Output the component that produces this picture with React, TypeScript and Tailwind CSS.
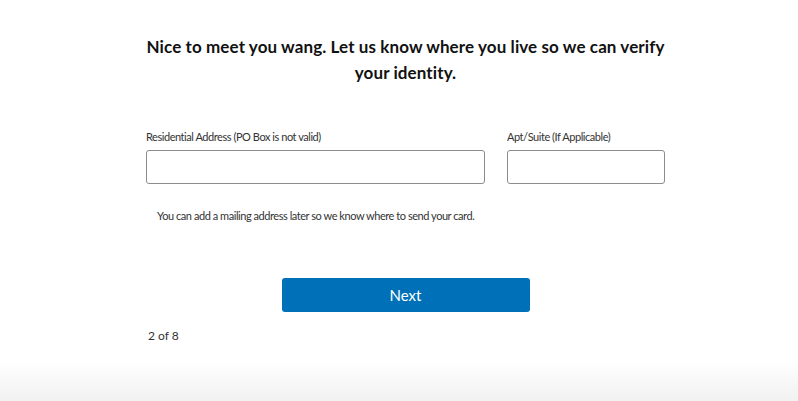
export default function App() {
  return (
    <div className="h-[401px] w-full overflow-hidden bg-[linear-gradient(to_bottom,#ffffff_360px,#f1f1f1_401px)] font-['Lato','Open_Sans',sans-serif] text-[#1a1a1a]">
      <div className="ml-[146px] w-[519px] pt-[34px]">
        <h1 className="text-center text-[17px] font-bold leading-[26px] tracking-[0.1px] text-[#111]">
          Nice to meet you wang. Let us know where you live so we can verify your identity.
        </h1>

        <div className="mt-[43px] flex gap-[22px]">
          <div className="flex w-[339px] flex-col">
            <label className="mb-[5px] text-[11px] leading-[16px] tracking-[-0.45px] text-[#333]">
              Residential Address (PO Box is not valid)
            </label>
            <input className="h-[34px] rounded-[3px] border border-[#8c8c8c] px-2 text-[13px] outline-none" />
          </div>
          <div className="flex w-[158px] flex-col">
            <label className="mb-[5px] text-[11px] leading-[16px] tracking-[-0.45px] text-[#333]">
              Apt/Suite (If Applicable)
            </label>
            <input className="h-[34px] rounded-[3px] border border-[#8c8c8c] px-2 text-[13px] outline-none" />
          </div>
        </div>

        <p className="mt-[24px] pl-[11px] text-[11px] leading-[15px] tracking-[-0.45px] text-[#333]">
          You can add a mailing address later so we know where to send your card.
        </p>

        <div className="mt-[55px] flex justify-center">
          <button className="h-[34px] w-[248px] rounded-[3px] bg-[#0071b9] text-[15px] text-white">
            Next
          </button>
        </div>

        <p className="mt-[16px] pl-[2px] text-[12px] leading-[16px] text-[#333]">2 of 8</p>
      </div>
    </div>
  )
}
